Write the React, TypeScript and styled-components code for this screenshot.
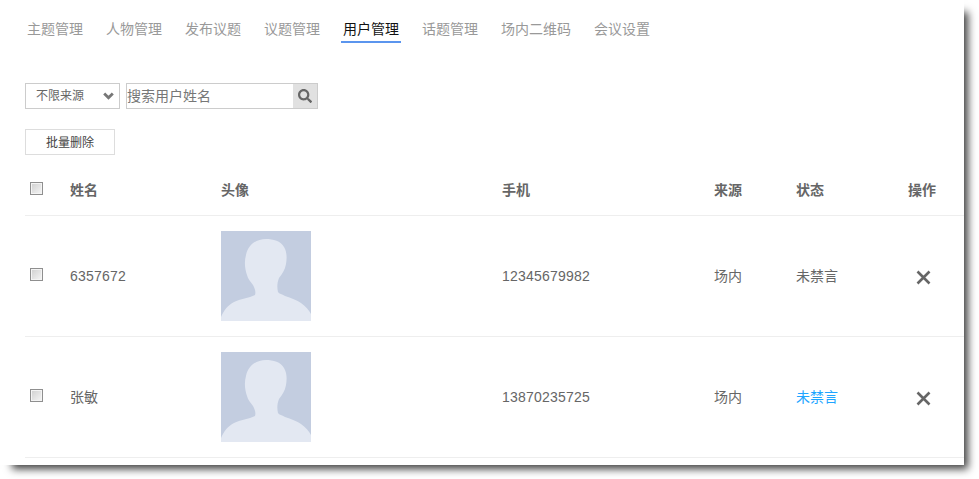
import React from "react";
import styled, { createGlobalStyle } from "styled-components";
import { FaSearch } from "react-icons/fa";

const Global = createGlobalStyle`
  html, body { margin: 0; padding: 0; background: #fff; }
  body { font-family: "Liberation Sans", "Noto Sans CJK SC", sans-serif; color: #666; }
`;
const Page = styled.div`
  width: 979px; height: 479px; overflow: hidden; background: #fff;
`;
const Panel = styled.div`
  width: 964px; height: 465px; box-sizing: border-box; background: #fff;
  padding: 17px 0 0 25px;
  box-shadow: 8px 8px 8px -4px rgba(0,0,0,.75);
`;
const Tabs = styled.nav`display: flex; gap: 19px; height: 26px;`;
const Tab = styled.a<{ $active?: boolean }>`
  box-sizing: border-box; height: 26px; padding: 0 2px; line-height: 24px; font-size: 14px;
  color: ${p => (p.$active ? "#111" : "#999")};
  border-bottom: 2px solid ${p => (p.$active ? "#5b95ee" : "transparent")};
`;
const Filters = styled.div`display: flex; gap: 6px; margin-top: 40px; height: 26px;`;
const SelectBox = styled.div`
  box-sizing: border-box; width: 95px; height: 26px; border: 1px solid #ccc;
  padding-left: 10px; display: flex; align-items: center; justify-content: space-between;
  padding-right: 5px; font-size: 12px; line-height: 24px;
`;
const SearchBox = styled.div`
  box-sizing: border-box; width: 192px; height: 26px; border: 1px solid #ccc;
  display: flex; align-items: stretch;
`;
const SearchInput = styled.input`
  flex: 1; min-width: 0; border: 0; outline: 0; padding: 0; font: 14px "Liberation Sans", "Noto Sans CJK SC", sans-serif;
  color: #666;
  &::placeholder { color: #777; opacity: 1; }
`;
const SearchBtn = styled.span`
  width: 24px; background: #e1e1e1; display: flex; align-items: center; justify-content: center; color: #666;
`;
const BatchBtn = styled.button`
  display: block; box-sizing: border-box; width: 90px; height: 26px; margin-top: 20px; padding: 0 0 2px;
  background: #fff; border: 1px solid #ddd; font: 12px "Liberation Sans", "Noto Sans CJK SC", sans-serif; color: #444;
`;
const Table = styled.table`
  width: 939px; table-layout: fixed; border-collapse: collapse; margin-top: 10px; font-size: 14px;
`;
const Th = styled.th<{ $w: number }>`
  width: ${p => p.$w}px; box-sizing: border-box; height: 50px; padding: 0 0 1px; text-align: left; font-weight: 700; color: #666;
  border-bottom: 1px solid #eee; vertical-align: middle;
`;
const Td = styled.td`
  height: 121px; box-sizing: border-box; padding: 0; border-bottom: 1px solid #eee; vertical-align: middle;
`;
const CheckCell = styled.div<{ $head?: boolean }>`padding-left: 5px; display: flex; margin-top: ${p => (p.$head ? "-1px" : "-3px")};`;
const Check = styled.input.attrs({ type: "checkbox" })`
  appearance: none; margin: 0; width: 13px; height: 13px; box-sizing: border-box; border: 1px solid #8f8f8f;
  box-shadow: inset 0 0 0 1px #f4f4f4; background: linear-gradient(135deg, #cfcfcf, #f6f6f6);
`;
const Digits = styled.span`letter-spacing: .22px;`;
const Cjk = styled.div`padding-bottom: 2px;`;
const Status = styled(Cjk)<{ $link?: boolean }>`color: ${p => (p.$link ? "#1ea5ff" : "#666")};`;
const AvatarSvg = styled.svg`display: block; width: 90px; height: 90px;`;
const DeleteIcon = styled.svg`display: block; width: 15px; height: 15px; margin: 3px 0 0 8px;`;

const Avatar = () => (
  <AvatarSvg viewBox="0 0 90 90">
    <rect width="90" height="90" fill="#c3cde0" />
    <path
      fill="#e3e8f2"
      d="M45 8C52 8 60 10 63 16C66 21 66 27 65 33C64 39 61 43 58 47C56 52 56 57 57 61C58 63 61 63 64 65C70 67 76 69 80 72C85 76 88 79 90 83V90H0V86C3 79 7 74 13 71C19 68 28 67 34 64C35 61 34 58 32 54C29 50 27 48 26 44C24 38 23 31 25 24C27 14 35 8 45 8Z"
    />
  </AvatarSvg>
);
const Chevron = () => (
  <svg width="11" height="8" viewBox="0 0 11 8"><path d="M1.2 1.5L5.5 5.8L9.8 1.5" fill="none" stroke="#777" strokeWidth="2.8" /></svg>
);
const Del = () => (
  <DeleteIcon viewBox="0 0 15 15"><path d="M1.5 1.5L13.5 13.5M13.5 1.5L1.5 13.5" stroke="#666" strokeWidth="2.6" /></DeleteIcon>
);

const tabs = ["主题管理", "人物管理", "发布议题", "议题管理", "用户管理", "话题管理", "场内二维码", "会议设置"];
const rows = [
  { name: "6357672", phone: "12345679982", link: false },
  { name: "张敏", phone: "13870235725", link: true },
];

export default function App() {
  return (
    <Page>
      <Global />
      <Panel>
        <Tabs>
          {tabs.map(t => <Tab key={t} $active={t === "用户管理"}>{t}</Tab>)}
        </Tabs>
        <Filters>
          <SelectBox>不限来源<Chevron /></SelectBox>
          <SearchBox>
            <SearchInput placeholder="搜索用户姓名" />
            <SearchBtn><FaSearch size={14} /></SearchBtn>
          </SearchBox>
        </Filters>
        <BatchBtn>批量删除</BatchBtn>
        <Table>
          <thead>
            <tr>
              <Th $w={45}><CheckCell $head><Check /></CheckCell></Th>
              <Th $w={151}>姓名</Th>
              <Th $w={281}>头像</Th>
              <Th $w={212}>手机</Th>
              <Th $w={82}>来源</Th>
              <Th $w={112}>状态</Th>
              <Th $w={56}>操作</Th>
            </tr>
          </thead>
          <tbody>
            {rows.map(r => (
              <tr key={r.phone}>
                <Td><CheckCell><Check /></CheckCell></Td>
                <Td>{/^\d+$/.test(r.name) ? <Digits>{r.name}</Digits> : <Cjk>{r.name}</Cjk>}</Td>
                <Td><Avatar /></Td>
                <Td><Digits>{r.phone}</Digits></Td>
                <Td><Cjk>场内</Cjk></Td>
                <Td><Status $link={r.link}>未禁言</Status></Td>
                <Td><Del /></Td>
              </tr>
            ))}
          </tbody>
        </Table>
      </Panel>
    </Page>
  );
}
